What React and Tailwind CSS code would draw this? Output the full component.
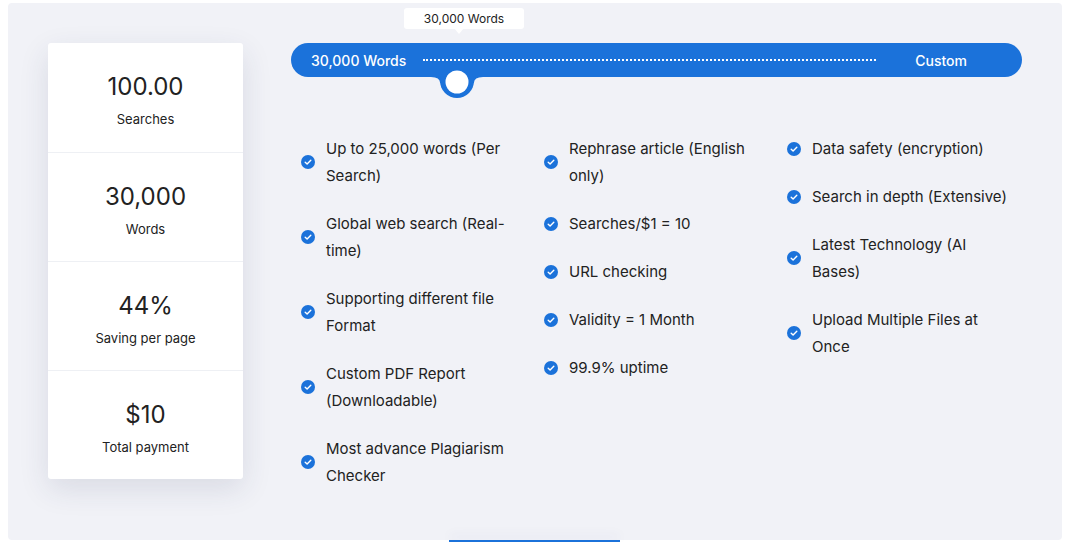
import React from "react";

const stats = [
  { value: "100.00", label: "Searches" },
  { value: "30,000", label: "Words" },
  { value: "44%", label: "Saving per page" },
  { value: "$10", label: "Total payment" },
];

const columns = [
  [
    "Up to 25,000 words (Per Search)",
    "Global web search (Real-time)",
    "Supporting different file Format",
    "Custom PDF Report (Downloadable)",
    "Most advance Plagiarism Checker",
  ],
  [
    "Rephrase article (English only)",
    "Searches/$1 = 10",
    "URL checking",
    "Validity = 1 Month",
    "99.9% uptime",
  ],
  [
    "Data safety (encryption)",
    "Search in depth (Extensive)",
    "Latest Technology (AI Bases)",
    "Upload Multiple Files at Once",
  ],
];

const CheckIcon = () => (
  <svg width="14" height="14" viewBox="0 0 14 14" className="shrink-0">
    <circle cx="7" cy="7" r="7" fill="#1b72da" />
    <path d="M4.2 7.2 L6.1 9 L9.8 5.2" fill="none" stroke="#fff" strokeWidth="1.4" strokeLinecap="round" strokeLinejoin="round" />
  </svg>
);

// slider thumb sitting on the bottom edge of the bar
const Knob = () => (
  <svg width="52" height="40" viewBox="0 0 52 40" className="absolute left-[140px] top-[20px]">
    <path d="M0 10 H52 V14 Q43 14 42.9 20 L9.1 20 Q9 14 0 14 Z" fill="#1b72da" />
    <circle cx="26" cy="18" r="17" fill="#1b72da" />
    <circle cx="26" cy="19" r="11.5" fill="#fff" />
  </svg>
);

export default function App() {
  return (
    <div className="min-h-screen bg-white font-['Inter',sans-serif] text-[#222]">
      <div className="pt-[3px] pl-[8px] pr-[4px]">
        <div className="h-[537px] bg-[#f1f2f7] rounded-[4px] flex pl-[40px] pt-[40px] gap-[48px]">
          {/* Stats card */}
          <div className="w-[195px] shrink-0 h-[436px] bg-white rounded-[3px] shadow-[0_10px_30px_rgba(40,50,90,0.12)] flex flex-col">
            {stats.map((s, i) => (
              <div
                key={s.label}
                className={`h-[109px] flex flex-col items-center pt-[28px] ${i > 0 ? "border-t border-[#eef0f4]" : ""}`}
              >
                <div className="text-[24px] leading-[32px] text-[#222]">{s.value}</div>
                <div className="text-[13px] leading-[18px] mt-[7px] text-[#222]">{s.label}</div>
              </div>
            ))}
          </div>

          {/* Right content */}
          <div className="flex-1">
            <div className="relative w-[731px] h-[34px] bg-[#1b72da] rounded-full flex items-center pl-[20px] pr-[55px]">
              {/* tooltip */}
              <div className="absolute left-[113px] top-[-35px] w-[120px] h-[21px] bg-white rounded-[3px] flex items-center justify-center text-[12px] text-[#222]">
                30,000 Words
                <div className="absolute left-[50px] top-[20px] w-0 h-0 border-l-[5px] border-r-[5px] border-t-[6px] border-l-transparent border-r-transparent border-t-white" />
              </div>
              <span className="text-white text-[14px] font-medium w-[112px]">30,000 Words</span>
              <div className="w-[453px] border-t-2 border-dotted border-white" />
              <span className="ml-auto text-white text-[14px] font-medium">Custom</span>
              <Knob />
            </div>

            <div className="flex pl-[10px] mt-[58px]">
              {columns.map((col, ci) => (
                <div key={ci} className="w-[243px] shrink-0 flex flex-col gap-[21px]">
                  {col.map((item) => (
                    <div key={item} className="flex items-center gap-[11px]">
                      <CheckIcon />
                      <span className="w-[198px] text-[15px] leading-[27px] text-[#222]">{item}</span>
                    </div>
                  ))}
                </div>
              ))}
            </div>
          </div>
        </div>
      </div>
      <div className="ml-[449px] w-[171px] h-[2px] bg-[#1b72da] shadow-[0_-4px_12px_rgba(40,60,140,0.12)]" />
    </div>
  );
}
